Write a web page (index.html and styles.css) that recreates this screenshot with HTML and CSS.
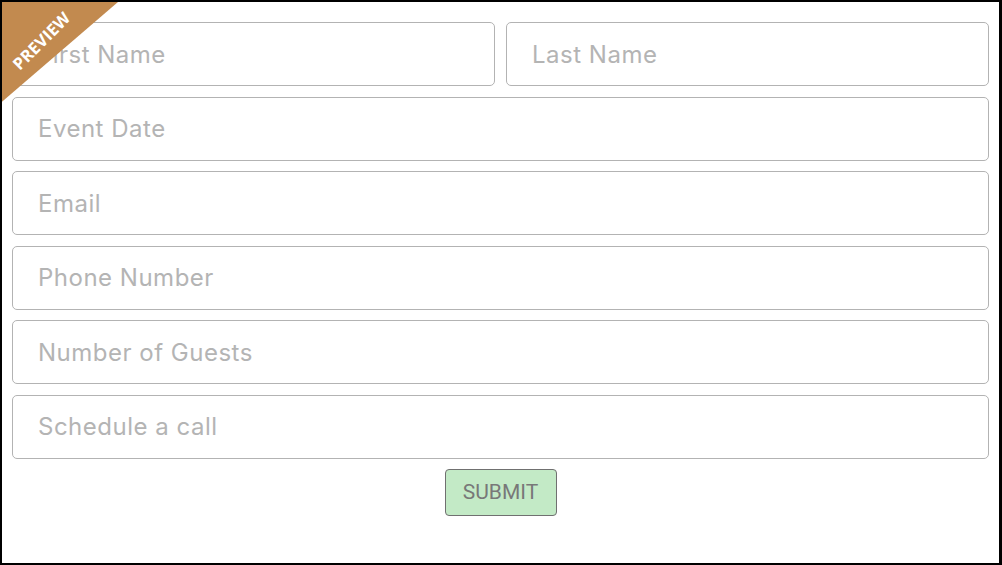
FILE: index.html
```html
<!DOCTYPE html>
<html>
<head>
<meta charset="utf-8">
<link rel="stylesheet" href="styles.css">
</head>
<body>
<div class="frame">
  <div class="ribbon"><span class="ribbon-text">PREVIEW</span></div>
  <form class="form">
    <div class="row two">
      <input class="field" type="text" placeholder="First Name">
      <input class="field" type="text" placeholder="Last Name">
    </div>
    <input class="field" type="text" placeholder="Event Date">
    <input class="field" type="text" placeholder="Email">
    <input class="field" type="text" placeholder="Phone Number">
    <input class="field" type="text" placeholder="Number of Guests">
    <input class="field" type="text" placeholder="Schedule a call">
    <div class="actions">
      <button class="submit" type="button">SUBMIT</button>
    </div>
  </form>
</div>
</body>
</html>
```
FILE: styles.css
```css
html, body {
  margin: 0;
  padding: 0;
  background: #fff;
}
.frame {
  position: relative;
  box-sizing: border-box;
  width: 1002px;
  height: 565px;
  border: 2px solid #000;
  border-right-width: 3px;
  overflow: hidden;
}
.form {
  display: flex;
  flex-direction: column;
  gap: 10.6px;
  padding: 20px 10px 0 10px;
}
.row.two {
  display: grid;
  grid-template-columns: 1fr 1fr;
  gap: 11px;
}
.field {
  box-sizing: border-box;
  width: 100%;
  height: 64px;
  margin: 0;
  border: 1px solid #b3b3b3;
  border-radius: 5px;
  padding: 0 25px;
  font-family: "Inter", "Liberation Sans", sans-serif;
  font-size: 24px;
  letter-spacing: 0.5px;
  color: #555;
  background: #fff;
  outline: none;
}
.field::placeholder {
  color: #b4b4b4;
}
.actions {
  display: flex;
  justify-content: center;
  margin-top: -1px;
}
.submit {
  box-sizing: border-box;
  width: 112px;
  height: 47px;
  background: #c3eac6;
  border: 1px solid #707070;
  border-radius: 4px;
  color: #787878;
  font-family: "Roboto", "Liberation Sans", sans-serif;
  font-size: 21px;
  padding: 0;
}
.ribbon {
  position: absolute;
  left: 0;
  top: 0;
  width: 116px;
  height: 116px;
  background: #c28a4f;
  clip-path: polygon(0 0, 100% 0, 0 86%);
  z-index: 2;
}
.ribbon-text {
  position: absolute;
  left: -9px;
  top: 27px;
  width: 96px;
  text-align: center;
  transform: rotate(-45deg);
  color: #fff;
  font-family: "Open Sans", "Liberation Sans", sans-serif;
  font-weight: 700;
  font-size: 16.5px;
  letter-spacing: 0.2px;
}
```
